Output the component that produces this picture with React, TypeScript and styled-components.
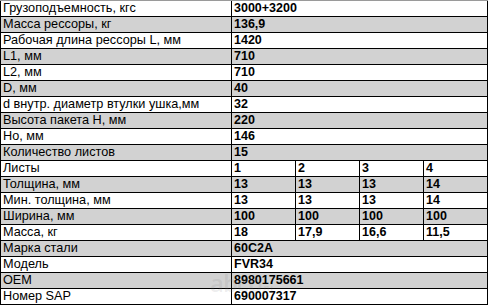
import React from "react";
import styled, { createGlobalStyle } from "styled-components";

const Global = createGlobalStyle`
  html, body { margin: 0; padding: 0; background: #fff; }
  body { font-family: "Liberation Sans", Arial, Helvetica, sans-serif; }
`;

const Sheet = styled.div`
  position: relative;
  width: 488px;
  border-top: 1px solid #9a9a9a;
  display: flex;
  flex-direction: column;
`;

const Row = styled.div<{ $shaded: boolean }>`
  display: grid;
  grid-template-columns: 232px repeat(4, 64px);
  height: 16px;
  background: ${(p) => (p.$shaded ? "#d2d2d2" : "#ffffff")};
`;

const Label = styled.div`
  box-sizing: border-box;
  border-left: 1px solid #000;
  border-right: 1px solid #000;
  border-bottom: 1px solid #000;
  padding-left: 2px;
  font-size: 12.7px;
  line-height: 15px;
  color: #000;
  white-space: nowrap;
  overflow: hidden;
`;

const Value = styled.div<{ $span?: number }>`
  box-sizing: border-box;
  grid-column: span ${(p) => p.$span ?? 1};
  border-right: 1px solid #000;
  border-bottom: 1px solid #000;
  padding-left: 2px;
  font-size: 12.5px;
  line-height: 15px;
  font-weight: bold;
  color: #000;
  white-space: nowrap;
  overflow: hidden;
`;

const Watermark = styled.div`
  position: absolute;
  left: 210px;
  top: 270px;
  font-family: "Open Sans", "Liberation Sans", sans-serif;
  font-size: 24px;
  line-height: 24px;
  font-weight: 600;
  color: rgba(120, 120, 120, 0.14);
  letter-spacing: -1px;
  pointer-events: none;
  & span {
    font-size: 10px;
  }
`;

type Item = { label: string; values: string[] };

const data: Item[] = [
  { label: "Грузоподъемность, кгс", values: ["3000+3200"] },
  { label: "Масса рессоры, кг", values: ["136,9"] },
  { label: "Рабочая длина рессоры L, мм", values: ["1420"] },
  { label: "L1, мм", values: ["710"] },
  { label: "L2, мм", values: ["710"] },
  { label: "D, мм", values: ["40"] },
  { label: "d внутр. диаметр втулки ушка,мм", values: ["32"] },
  { label: "Высота пакета H, мм", values: ["220"] },
  { label: "Но, мм", values: ["146"] },
  { label: "Количество листов", values: ["15"] },
  { label: "Листы", values: ["1", "2", "3", "4"] },
  { label: "Толщина, мм", values: ["13", "13", "13", "14"] },
  { label: "Мин. толщина, мм", values: ["13", "13", "13", "14"] },
  { label: "Ширина, мм", values: ["100", "100", "100", "100"] },
  { label: "Масса, кг", values: ["18", "17,9", "16,6", "11,5"] },
  { label: "Марка стали", values: ["60С2А"] },
  { label: "Модель", values: ["FVR34"] },
  { label: "OEM", values: ["8980175661"] },
  { label: "Номер SAP", values: ["690007317"] },
];

export default function App() {
  return (
    <>
      <Global />
      <Sheet>
        {data.map((item, i) => (
          <Row key={item.label} $shaded={i % 2 === 1}>
            <Label>{item.label}</Label>
            {item.values.length === 1 ? (
              <Value $span={4}>{item.values[0]}</Value>
            ) : (
              item.values.map((v, j) => <Value key={j}>{v}</Value>)
            )}
          </Row>
        ))}
        <Watermark aria-hidden="true">
          abcp<span>.ru</span>
        </Watermark>
      </Sheet>
    </>
  );
}
